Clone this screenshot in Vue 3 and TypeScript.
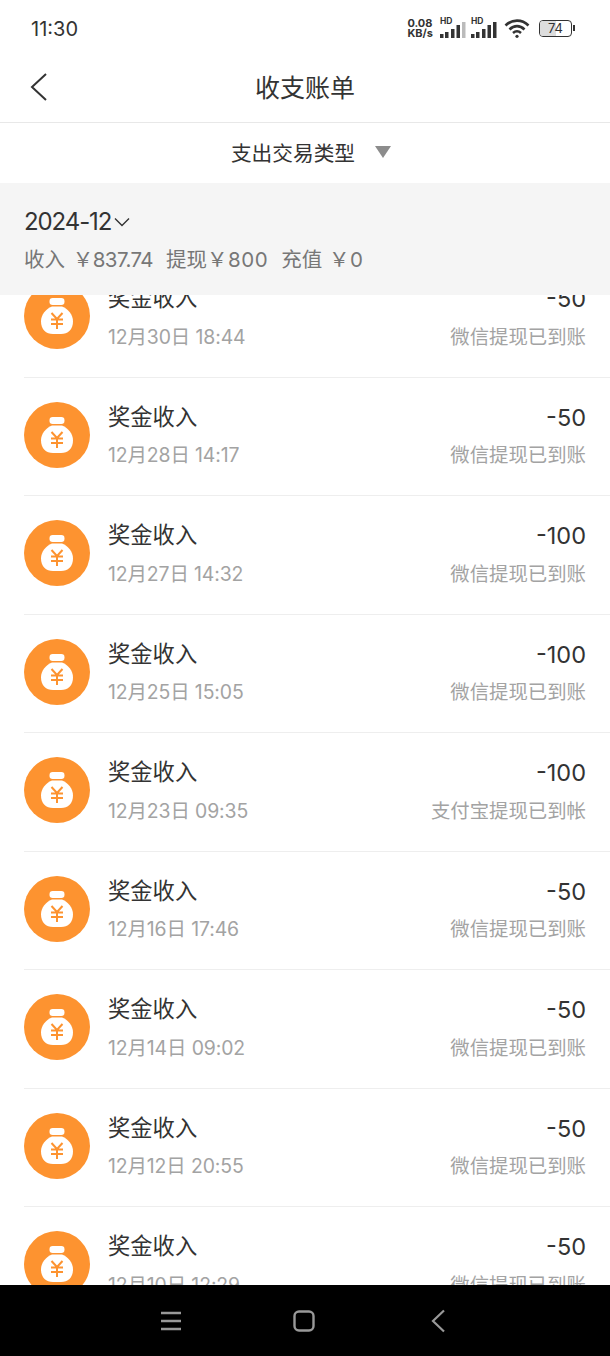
<script setup lang="ts">
interface Bill {
  date: string
  amount: number
  status: string
}

const wechat = '微信提现已到账'

const bills: Bill[] = [
  { date: '12月30日 18:44', amount: -50, status: wechat },
  { date: '12月28日 14:17', amount: -50, status: wechat },
  { date: '12月27日 14:32', amount: -100, status: wechat },
  { date: '12月25日 15:05', amount: -100, status: wechat },
  { date: '12月23日 09:35', amount: -100, status: '支付宝提现已到帐' },
  { date: '12月16日 17:46', amount: -50, status: wechat },
  { date: '12月14日 09:02', amount: -50, status: wechat },
  { date: '12月12日 20:55', amount: -50, status: wechat },
  { date: '12月10日 12:29', amount: -50, status: wechat }
]
</script>

<template>
  <div class="page">
    <div class="status-bar">
      <span class="time">11:30</span>
      <div class="status-icons">
        <div class="speed"><span>0.08</span><span>KB/s</span></div>
        <div class="signal">
          <span class="hd">HD</span>
          <svg width="26" height="16" viewBox="0 0 26 16">
            <rect x="0" y="12" width="3.5" height="4" fill="#333" />
            <rect x="5" y="10" width="3.5" height="6" fill="#333" />
            <rect x="11" y="7" width="3.5" height="9" fill="#333" />
            <rect x="16.5" y="3" width="3.5" height="13" fill="#333" />
            <rect x="22" y="0" width="3.5" height="16" fill="#bbb" />
          </svg>
        </div>
        <div class="signal">
          <span class="hd">HD</span>
          <svg width="26" height="16" viewBox="0 0 26 16">
            <rect x="0" y="12" width="3.5" height="4" fill="#333" />
            <rect x="5" y="10" width="3.5" height="6" fill="#333" />
            <rect x="11" y="7" width="3.5" height="9" fill="#333" />
            <rect x="16.5" y="3" width="3.5" height="13" fill="#333" />
            <rect x="22" y="0" width="3.5" height="16" fill="#333" />
          </svg>
        </div>
        <svg class="wifi" width="27" height="21" viewBox="0 0 27 21" fill="none" stroke="#333" stroke-width="2.6">
          <path d="M1.5 7.5C8 1 18 1 24.5 7.5" />
          <path d="M5.5 11.5C10 7 16 7 20.5 11.5" />
          <path d="M9 15C11.5 12.8 14.5 12.8 17 15" />
          <circle cx="13" cy="18.3" r="1.6" fill="#333" stroke="none" />
        </svg>
        <div class="battery">
          <div class="battery-body">
            <span class="battery-fill"></span>
            <span class="battery-num">74</span>
          </div>
          <span class="battery-tip"></span>
        </div>
      </div>
    </div>

    <header class="nav">
      <svg class="back" width="18" height="30" viewBox="0 0 18 30" fill="none" stroke="#333" stroke-width="2">
        <path d="M16 2L2 15L16 28" />
      </svg>
      <span class="nav-title">收支账单</span>
    </header>

    <div class="filter">
      <span>支出交易类型</span>
      <span class="triangle"></span>
    </div>

    <div class="month">
      <div class="month-picker">
        <span class="month-text">2024-12</span>
        <svg width="18" height="10" viewBox="0 0 18 10" fill="none" stroke="#333" stroke-width="1.4">
          <path d="M2 1.5L9 8.5L16 1.5" />
        </svg>
      </div>
      <div class="summary">
        <span>收入 <span class="income">￥837.74</span></span>
        <span>提现<span class="withdraw">￥800</span></span>
        <span>充值 <span class="recharge">￥0</span></span>
      </div>
    </div>

    <main class="scroller">
      <ul class="list">
        <li v-for="bill in bills" :key="bill.date" class="row">
          <div class="avatar">
            <svg width="32" height="36" viewBox="0 0 32 36">
              <rect x="8.500" y="0" width="15" height="7" rx="3.200" fill="#fff" />
              <path d="M11 8.500h10C27.500 11 32 17 32 23.500C32 31.500 27 36 20 36H12C5 36 0 31.500 0 23.500C0 17 4.500 11 11 8.500Z" fill="#fff" />
              <path d="M10.500 15l5.500 6l5.500-6M16 21V31M10 21.500h12M10 26h12" fill="none" stroke="#fd9330" stroke-width="2" />
            </svg>
          </div>
          <div class="row-main">
            <div class="row-line">
              <span class="row-title">奖金收入</span>
              <span class="row-amount">{{ bill.amount }}</span>
            </div>
            <div class="row-line sub">
              <span class="row-date">{{ bill.date }}</span>
              <span>{{ bill.status }}</span>
            </div>
          </div>
        </li>
      </ul>
    </main>

    <footer class="system-nav">
      <svg width="22" height="20" viewBox="0 0 22 20" stroke="#999" stroke-width="2.400">
        <path d="M1 2h20M1 10h20M1 18h20" />
      </svg>
      <svg width="22" height="22" viewBox="0 0 22 22" fill="none" stroke="#999" stroke-width="2.400">
        <rect x="1.500" y="1.500" width="19" height="19" rx="4.500" />
      </svg>
      <svg class="sys-back" width="14" height="24" viewBox="0 0 14 24" fill="none" stroke="#999" stroke-width="2.200">
        <path d="M13 1.500L2 12L13 22.500" />
      </svg>
    </footer>
  </div>
</template>

<style scoped>
.page {
  display: flex;
  flex-direction: column;
  height: 1356px;
  overflow: hidden;
  background: #fff;
  color: #333;
  font-family: Inter, "Noto Sans CJK SC", sans-serif;
}

.status-bar {
  display: flex;
  align-items: center;
  justify-content: space-between;
  height: 56px;
  padding: 0 35px 0 31px;
  box-sizing: border-box;
  flex-shrink: 0;
}
.time {
  font-size: 20px;
  padding-top: 2px;
  color: #333;
}
.status-icons {
  display: flex;
  align-items: center;
  gap: 5px;
}
.speed {
  display: flex;
  flex-direction: column;
  font-size: 11px;
  line-height: 10px;
  font-weight: 700;
  margin-right: 2px;
}
.signal {
  position: relative;
  padding-top: 3px;
}
.signal svg {
  display: block;
}
.hd {
  position: absolute;
  left: 0;
  top: -3px;
  font-size: 8.500px;
  line-height: 10px;
  font-weight: 700;
}
.wifi {
  margin-left: 2px;
}
.battery {
  display: flex;
  align-items: center;
  margin-left: 3px;
}
.battery-body {
  position: relative;
  display: flex;
  align-items: center;
  justify-content: center;
  width: 31px;
  height: 15px;
  border: 1.500px solid #333;
  border-radius: 4px;
  overflow: hidden;
}
.battery-fill {
  position: absolute;
  left: 0;
  top: 0;
  bottom: 0;
  width: 50%;
  background: #ddd;
}
.battery-num {
  position: relative;
  font-size: 13px;
}
.battery-tip {
  width: 2px;
  height: 6px;
  margin-left: 1px;
  background: #333;
}

.nav {
  position: relative;
  display: flex;
  align-items: center;
  justify-content: center;
  height: 60px;
  padding-bottom: 6px;
  border-bottom: 1px solid #e8e8e8;
  flex-shrink: 0;
}
.back {
  position: absolute;
  left: 30px;
  top: 16px;
}
.nav-title {
  font-size: 25px;
}

.filter {
  display: flex;
  align-items: center;
  justify-content: center;
  gap: 20px;
  height: 58px;
  padding: 0 0 2px 12px;
  font-size: 20.700px;
  flex-shrink: 0;
}
.triangle {
  width: 0;
  height: 0;
  border-left: 8px solid transparent;
  border-right: 8px solid transparent;
  border-top: 12px solid #8c8c8c;
}

.month {
  display: flex;
  flex-direction: column;
  gap: 8px;
  height: 112px;
  padding: 24px 24px 0;
  background: #f5f5f5;
  box-sizing: border-box;
  flex-shrink: 0;
}
.month-picker {
  display: flex;
  align-items: center;
  gap: 2px;
  font-size: 24px;
  line-height: 30px;
}
.month-text {
  letter-spacing: -1.100px;
}
.summary {
  display: flex;
  gap: 13px;
  font-size: 20.500px;
  line-height: 30px;
  color: #777;
}
.income {
  margin-left: 2px;
  letter-spacing: -0.550px;
}
.withdraw {
  letter-spacing: 0.500px;
}
.recharge {
  letter-spacing: 0.500px;
  margin-left: 1px;
}

.scroller {
  flex: 1;
  min-height: 0;
  overflow: hidden;
}
.list {
  list-style: none;
  margin: -36px 0 0;
  padding: 0;
}
.row {
  display: flex;
  align-items: center;
  gap: 18px;
  height: 118.500px;
  padding: 0 24px 4px;
  box-sizing: border-box;
  position: relative;
}
.row::after {
  content: "";
  position: absolute;
  left: 24px;
  right: 0;
  bottom: 0;
  height: 1px;
  background: #eee;
}
.avatar {
  display: flex;
  align-items: center;
  justify-content: center;
  width: 66px;
  height: 66px;
  border-radius: 50%;
  background: #fd9330;
  flex-shrink: 0;
}
.row-main {
  flex: 1;
  display: flex;
  flex-direction: column;
  gap: 9px;
}
.row-line {
  display: flex;
  justify-content: space-between;
  align-items: center;
  height: 29px;
}
.row-title {
  margin-bottom: 2px;
  font-size: 22.300px;
}
.row-amount {
  margin-top: 3px;
  font-size: 23.500px;
}
.sub {
  font-size: 19.400px;
  color: #a3a3a3;
}
.row-date {
  letter-spacing: -0.100px;
}

.system-nav {
  display: flex;
  align-items: center;
  justify-content: center;
  gap: 111px;
  height: 71px;
  padding-right: 5px;
  background: #000;
  flex-shrink: 0;
}
.sys-back {
  margin-left: 5px;
}
</style>

<style>
html,
body {
  margin: 0;
  background: #fff;
}
</style>
